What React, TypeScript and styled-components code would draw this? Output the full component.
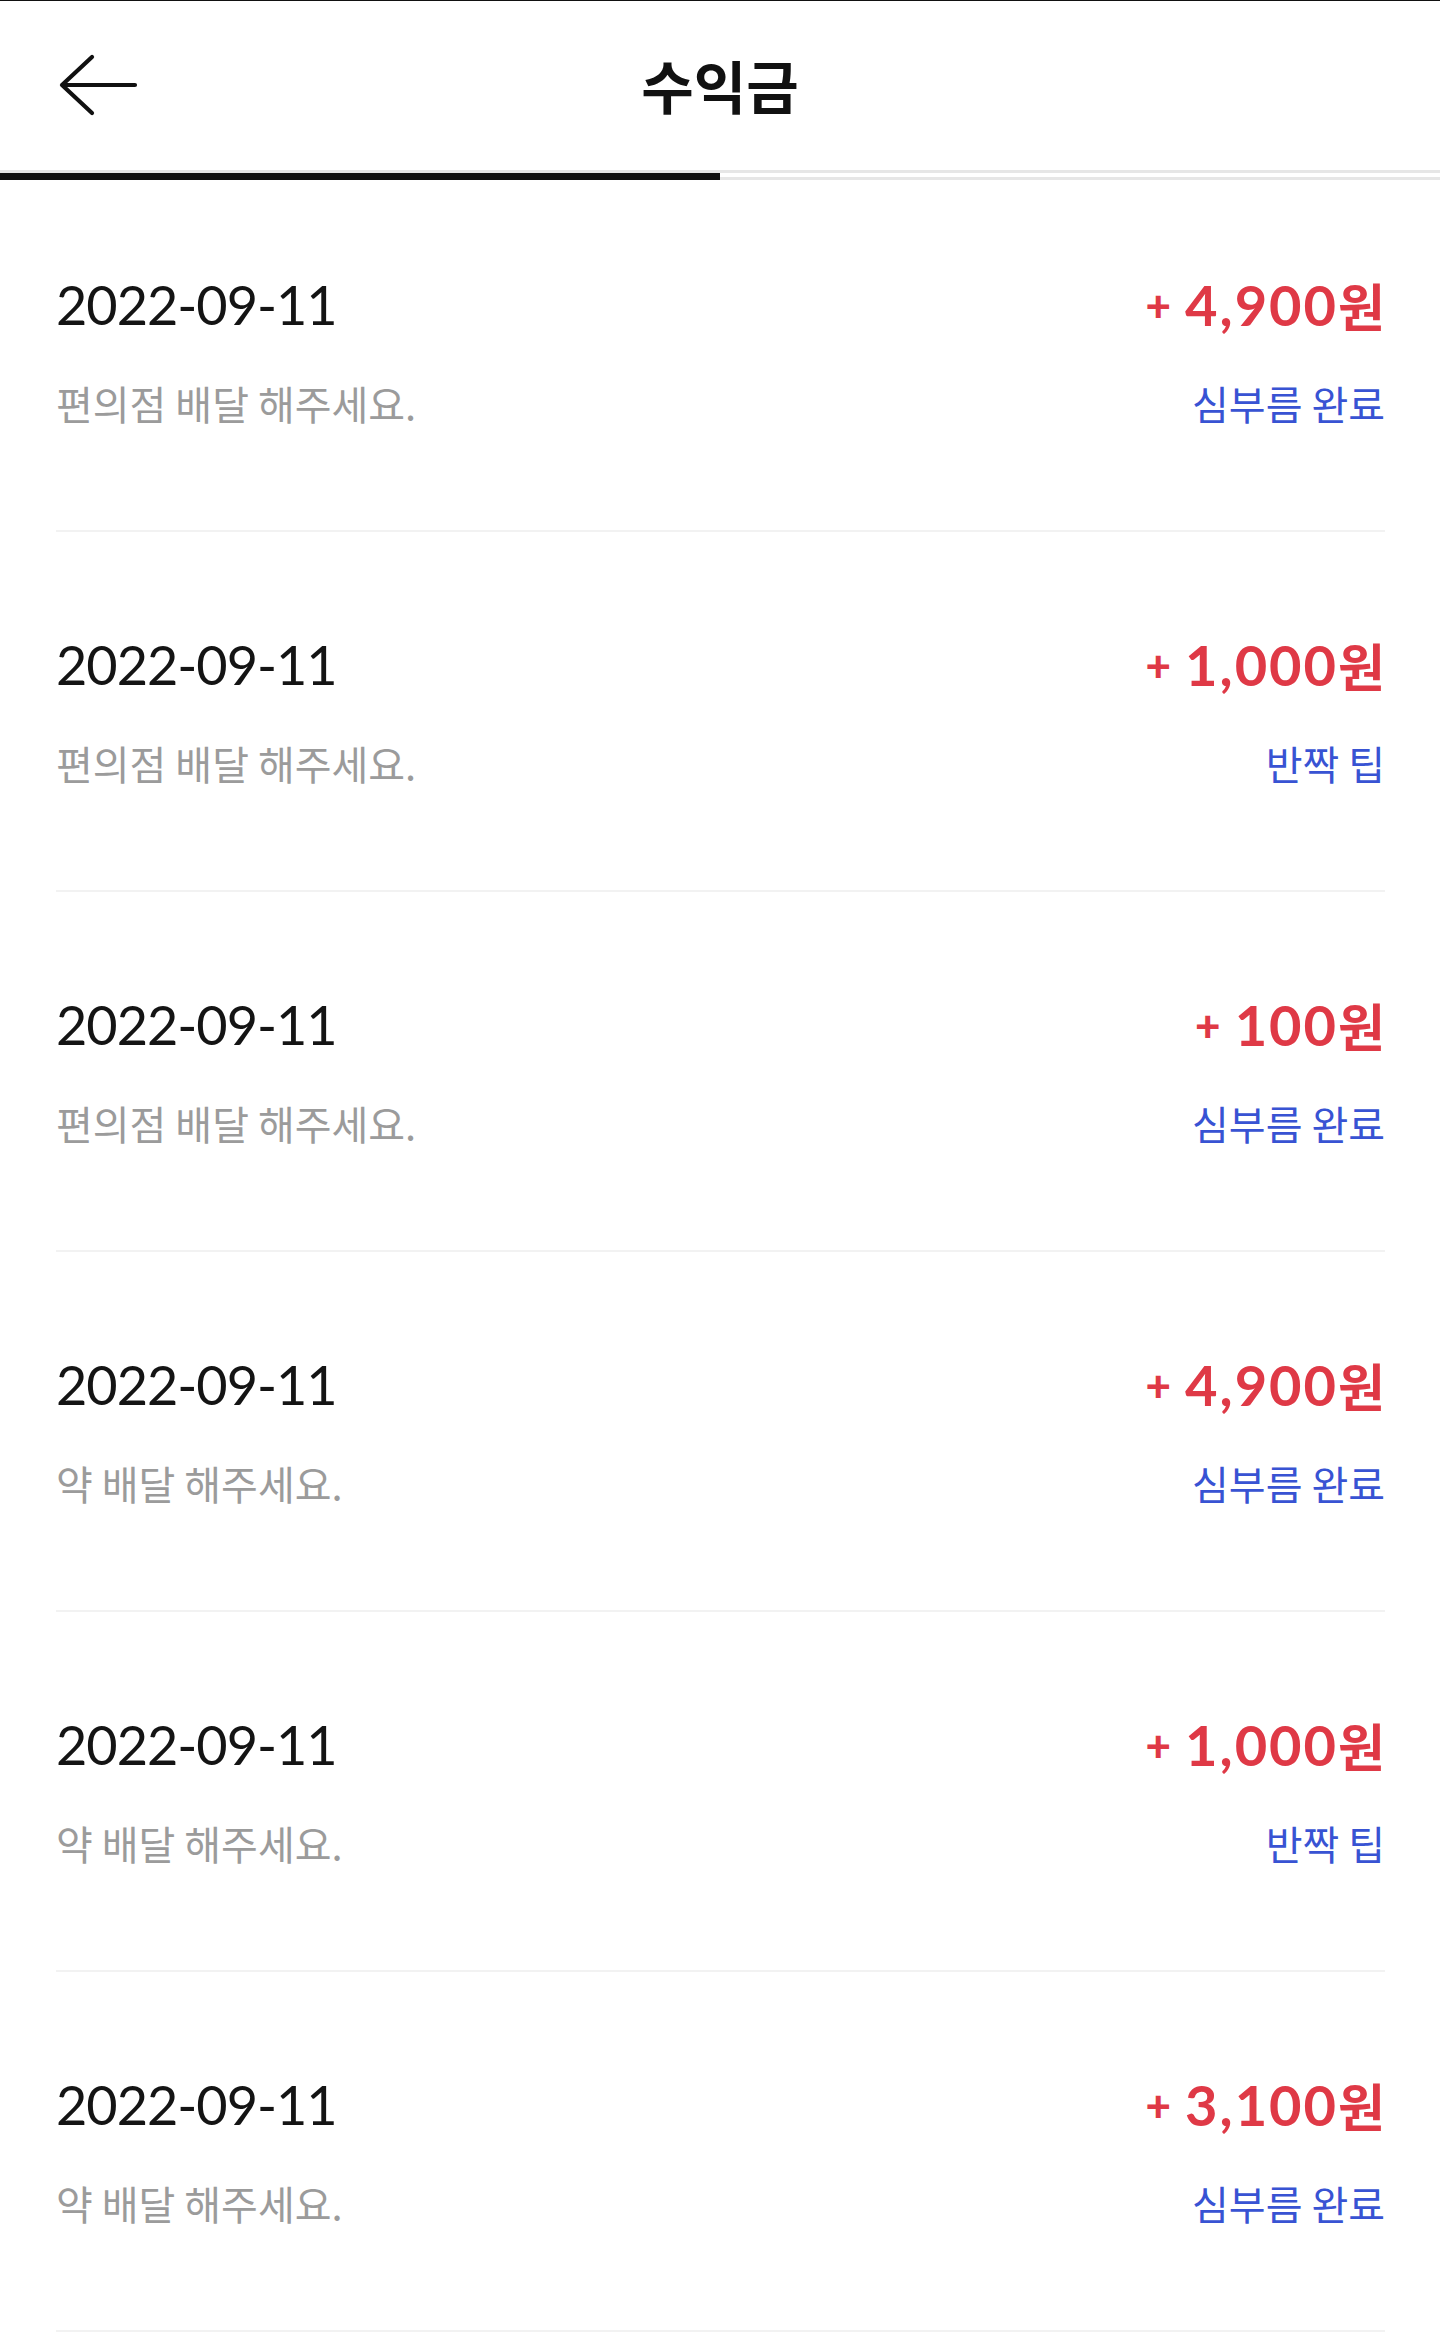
import React from "react";
import styled, { createGlobalStyle } from "styled-components";

const GlobalStyle = createGlobalStyle`
  html, body {
    margin: 0;
    padding: 0;
    background: #ffffff;
  }
  body {
    font-family: "Noto Sans CJK KR", "Noto Sans", sans-serif;
    -webkit-font-smoothing: antialiased;
  }
  * { box-sizing: border-box; }
`;

const Page = styled.div`
  width: 1440px;
  min-height: 2339px;
  background: #fff;
`;

const Header = styled.header`
  display: grid;
  grid-template-columns: 1fr auto 1fr;
  align-items: center;
  height: 173px;
  padding: 0 0 2px 0;
  border-top: 1px solid #111;
  border-bottom: 3px solid #e6e6e6;
`;

const BackButton = styled.button`
  justify-self: start;
  display: flex;
  align-items: center;
  padding: 0;
  margin: 0 0 0 58px;
  border: none;
  background: transparent;
  cursor: pointer;
  color: #111;
`;

const Title = styled.h1`
  margin: 0;
  font-family: "Noto Sans CJK KR", "Noto Sans", sans-serif;
  font-size: 57px;
  font-weight: 700;
  line-height: 1;
  color: #111;
`;

const Tabs = styled.div`
  display: grid;
  grid-template-columns: 1fr 1fr;
  height: 7px;
`;

const Tab = styled.div<{ $active?: boolean }>`
  height: 7px;
  background: ${(p) => (p.$active ? "#111111" : "transparent")};
  border-bottom: ${(p) => (p.$active ? "none" : "3px solid #e6e6e6")};
`;

const List = styled.ul`
  list-style: none;
  margin: 0;
  padding: 0;
`;

const Row = styled.li`
  display: flex;
  flex-direction: column;
  margin: 0 55px 0 56px;
  padding: 106px 0 107px;
  border-bottom: 2px solid #f2f2f2;
  &:first-child {
    padding-top: 98px;
  }
`;

const Line = styled.div`
  display: flex;
  justify-content: space-between;
  align-items: center;
`;

const DateText = styled.span`
  font-family: "Lato", "Noto Sans", sans-serif;
  font-size: 54px;
  font-weight: 400;
  line-height: 54px;
  letter-spacing: -1px;
  color: #141414;
`;

const Amount = styled.span`
  display: flex;
  align-items: center;
  font-family: "Lato", "Noto Sans CJK KR", sans-serif;
  font-size: 56px;
  font-weight: 700;
  line-height: 54px;
  letter-spacing: 2px;
  color: #df3946;
`;

const Plus = styled.span`
  font-size: 44px;
  font-weight: 900;
  margin-right: 14px;
  letter-spacing: 0;
`;

const Won = styled.span`
  font-family: "Noto Sans CJK KR", sans-serif;
  font-size: 51px;
  letter-spacing: 0;
  margin-left: 0;
`;

const SubLine = styled(Line)`
  margin-top: 52px;
`;

const Desc = styled.span`
  font-family: "Noto Sans CJK KR", "Noto Sans", sans-serif;
  font-size: 40px;
  font-weight: 400;
  line-height: 39px;
  color: #9b9b9b;
`;

const Status = styled.span`
  font-family: "Noto Sans CJK KR", "Noto Sans", sans-serif;
  font-size: 40px;
  font-weight: 400;
  line-height: 39px;
  color: #3853d3;
`;

type Item = { desc: string; amount: string; status: string };

const items: Item[] = [
  { desc: "편의점 배달 해주세요.", amount: "4,900", status: "심부름 완료" },
  { desc: "편의점 배달 해주세요.", amount: "1,000", status: "반짝 팁" },
  { desc: "편의점 배달 해주세요.", amount: "100", status: "심부름 완료" },
  { desc: "약 배달 해주세요.", amount: "4,900", status: "심부름 완료" },
  { desc: "약 배달 해주세요.", amount: "1,000", status: "반짝 팁" },
  { desc: "약 배달 해주세요.", amount: "3,100", status: "심부름 완료" },
];

const BackIcon = () => (
  <svg width="80" height="64" viewBox="0 0 80 64" fill="none">
    <path
      d="M34 4 L4 32 L34 60 M4 32 H77"
      stroke="currentColor"
      strokeWidth="4.2"
      strokeLinecap="round"
      strokeLinejoin="round"
    />
  </svg>
);

export default function App() {
  return (
    <Page>
      <GlobalStyle />
      <Header>
        <BackButton aria-label="뒤로">
          <BackIcon />
        </BackButton>
        <Title>수익금</Title>
        <div />
      </Header>
      <Tabs>
        <Tab $active />
        <Tab />
      </Tabs>
      <List>
        {items.map((it, i) => (
          <Row key={i}>
            <Line>
              <DateText>2022-09-11</DateText>
              <Amount>
                <Plus>+</Plus>
                {it.amount}
                <Won>원</Won>
              </Amount>
            </Line>
            <SubLine>
              <Desc>{it.desc}</Desc>
              <Status>{it.status}</Status>
            </SubLine>
          </Row>
        ))}
      </List>
    </Page>
  );
}
